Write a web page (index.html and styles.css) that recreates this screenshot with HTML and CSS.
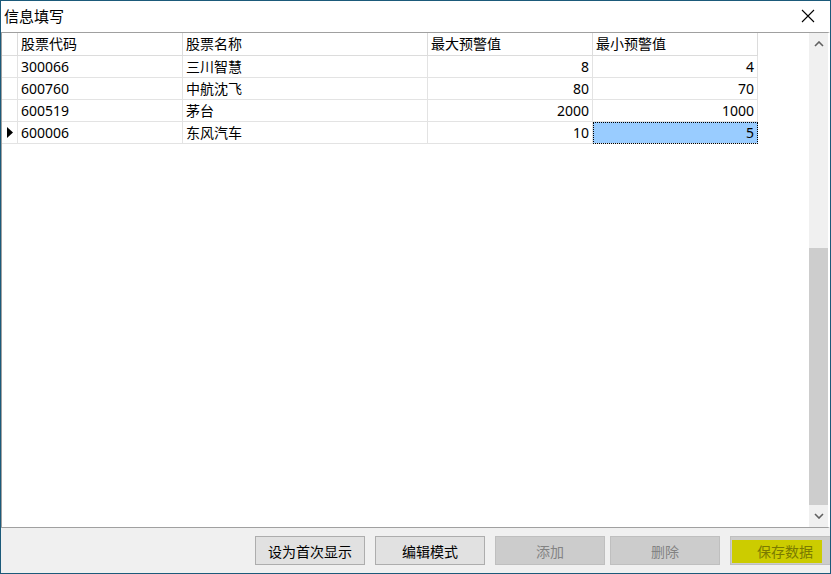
FILE: index.html
```html
<!DOCTYPE html>
<html>
<head>
    <title>信息填写</title>
    <link rel="stylesheet" href="styles.css">
</head>
<body>
    <div class="window">
        <div class="title-bar">
            <span class="title">信息填写</span>
            <svg class="close" width="14" height="14" viewBox="0 0 14 14">
                <path d="M1 1 L13 13 M13 1 L1 13" stroke="#000" stroke-width="1.1" fill="none"/>
            </svg>
        </div>

        <div class="grid-panel">
            <div class="grid">
                <div class="row head">
                    <div class="cell rowhead"></div>
                    <div class="cell c-code">股票代码</div>
                    <div class="cell c-name">股票名称</div>
                    <div class="cell c-num left">最大预警值</div>
                    <div class="cell c-num left">最小预警值</div>
                </div>
                <div class="row">
                    <div class="cell rowhead"></div>
                    <div class="cell c-code">300066</div>
                    <div class="cell c-name">三川智慧</div>
                    <div class="cell c-num">8</div>
                    <div class="cell c-num">4</div>
                </div>
                <div class="row">
                    <div class="cell rowhead"></div>
                    <div class="cell c-code">600760</div>
                    <div class="cell c-name">中航沈飞</div>
                    <div class="cell c-num">80</div>
                    <div class="cell c-num">70</div>
                </div>
                <div class="row">
                    <div class="cell rowhead"></div>
                    <div class="cell c-code">600519</div>
                    <div class="cell c-name">茅台</div>
                    <div class="cell c-num">2000</div>
                    <div class="cell c-num">1000</div>
                </div>
                <div class="row">
                    <div class="cell rowhead">
                        <svg width="7" height="11" viewBox="0 0 7 11"><path d="M0 0 L6 5.5 L0 11 Z" fill="#000"/></svg>
                    </div>
                    <div class="cell c-code">600006</div>
                    <div class="cell c-name">东风汽车</div>
                    <div class="cell c-num">10</div>
                    <div class="cell c-num selected">5</div>
                </div>
            </div>

            <div class="scrollbar">
                <div class="sb-arrow">
                    <svg width="10" height="6" viewBox="0 0 10 6"><path d="M1 5 L5 1 L9 5" stroke="#606060" stroke-width="1.6" fill="none"/></svg>
                </div>
                <div class="sb-track">
                    <div class="sb-thumb"></div>
                </div>
                <div class="sb-arrow">
                    <svg width="10" height="6" viewBox="0 0 10 6"><path d="M1 1 L5 5 L9 1" stroke="#606060" stroke-width="1.6" fill="none"/></svg>
                </div>
            </div>
        </div>

        <div class="footer">
            <button class="btn">设为首次显示</button>
            <button class="btn">编辑模式</button>
            <button class="btn" disabled>添加</button>
            <button class="btn narrow-gap" disabled>删除</button>
            <button class="btn save" disabled><span class="mark"></span><span class="label">保存数据</span></button>
        </div>
    </div>
</body>
</html>
```

FILE: styles.css
```css
body {
    margin: 0;
    font-family: "Noto Sans", "Noto Sans CJK SC", sans-serif;
    font-size: 14px;
    color: #000;
    background: #fff;
}

.window {
    width: 831px;
    height: 574px;
    box-sizing: border-box;
    border: 1px solid #1b5a7a;
    display: flex;
    flex-direction: column;
    overflow: hidden;
    background: #fff;
}

.title-bar {
    height: 31px;
    display: flex;
    align-items: center;
    justify-content: space-between;
    padding: 0 15px 0 3px;
    flex-shrink: 0;
}
.title {
    font-size: 15px;
    line-height: 31px;
}
.close {
    margin-top: -1px;
}

.grid-panel {
    height: 496px;
    box-sizing: border-box;
    border: 1px solid #a0a0a0;
    border-right: 2px solid #fff;
    display: flex;
    flex-shrink: 0;
}

.grid {
    flex-grow: 1;
}

.row {
    display: flex;
    height: 22px;
}
.row.head {
    height: 23px;
}

.cell {
    box-sizing: border-box;
    height: 100%;
    border-right: 1px solid #e3e3e3;
    border-bottom: 1px solid #e3e3e3;
    line-height: 21px;
    padding: 0 3px;
    white-space: nowrap;
    overflow: hidden;
}
.head .cell {
    line-height: 22px;
    border-color: #dcdcdc;
}

.rowhead {
    width: 16px;
    padding: 0;
    display: flex;
    align-items: center;
    justify-content: center;
}
.rowhead svg {
    margin-left: 1px;
}
.c-code {
    width: 165px;
}
.c-name {
    width: 245px;
}
.c-num {
    width: 165px;
    text-align: right;
}
.c-num.left {
    text-align: left;
}

.selected {
    background: #99ccff;
    outline: 1px dotted #000;
    outline-offset: -1px;
    border-right-color: #99ccff;
}

.scrollbar {
    width: 19px;
    background: #f0f0f0;
    display: flex;
    flex-direction: column;
}
.sb-arrow {
    height: 22px;
    display: flex;
    align-items: center;
    justify-content: center;
}
.sb-track {
    flex-grow: 1;
    display: flex;
    flex-direction: column;
    justify-content: flex-end;
}
.sb-thumb {
    height: 257px;
    background: #cdcdcd;
}

.footer {
    flex-grow: 1;
    background: #f0f0f0;
    display: flex;
    align-items: flex-start;
    padding: 8px 0 0 254px;
}

.btn {
    width: 110px;
    height: 29px;
    flex-shrink: 0;
    margin-right: 10px;
    box-sizing: border-box;
    border: 1px solid #adadad;
    background: #e1e1e1;
    font-family: "Noto Sans", "Noto Sans CJK SC", sans-serif;
    font-size: 14px;
    color: #000;
    padding: 0;
}
.btn:disabled {
    background: #cccccc;
    border-color: #bfbfbf;
    color: #838383;
}
.btn:nth-child(3) {
    margin-right: 5px;
}

.save {
    position: relative;
}
.save .mark {
    position: absolute;
    left: 1px;
    top: 3px;
    width: 90px;
    height: 23px;
    background: #cccc00;
}
.save .label {
    position: relative;
    color: #7a7a00;
}
```
